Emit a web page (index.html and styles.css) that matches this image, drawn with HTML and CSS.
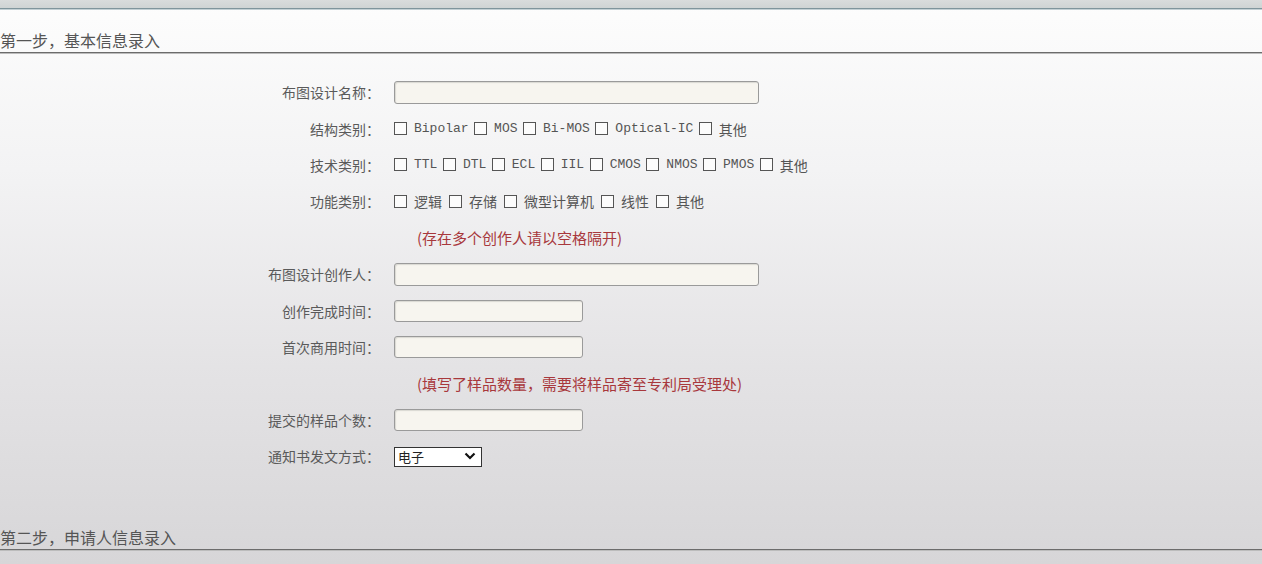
FILE: index.html
```html
<!DOCTYPE html>
<html lang="zh-CN">
<head>
  <meta charset="UTF-8">
  <title>集成电路布图设计登记申请</title>
  <link rel="stylesheet" href="styles.css">
</head>
<body>
  <div class="topbar"></div>

  <div class="step">
    <h3 class="step-title">第一步，基本信息录入</h3>
  </div>

  <div class="form">
    <div class="row">
      <label class="label">布图设计名称：</label>
      <div class="field"><input type="text" class="text long"></div>
    </div>
    <div class="row">
      <label class="label">结构类别：</label>
      <div class="field options latin">
        <label class="opt"><input type="checkbox">Bipolar</label>
        <label class="opt"><input type="checkbox">MOS</label>
        <label class="opt"><input type="checkbox">Bi-MOS</label>
        <label class="opt"><input type="checkbox">Optical-IC</label>
        <label class="opt"><input type="checkbox"><span class="cn">其他</span></label>
      </div>
    </div>
    <div class="row">
      <label class="label">技术类别：</label>
      <div class="field options latin">
        <label class="opt"><input type="checkbox">TTL</label>
        <label class="opt"><input type="checkbox">DTL</label>
        <label class="opt"><input type="checkbox">ECL</label>
        <label class="opt"><input type="checkbox">IIL</label>
        <label class="opt"><input type="checkbox">CMOS</label>
        <label class="opt"><input type="checkbox">NMOS</label>
        <label class="opt"><input type="checkbox">PMOS</label>
        <label class="opt"><input type="checkbox"><span class="cn">其他</span></label>
      </div>
    </div>
    <div class="row">
      <label class="label">功能类别：</label>
      <div class="field options cn-opts">
        <label class="opt"><input type="checkbox">逻辑</label>
        <label class="opt"><input type="checkbox">存储</label>
        <label class="opt"><input type="checkbox">微型计算机</label>
        <label class="opt"><input type="checkbox">线性</label>
        <label class="opt"><input type="checkbox">其他</label>
      </div>
    </div>
    <div class="row">
      <span class="label"></span>
      <div class="field note">(存在多个创作人请以空格隔开)</div>
    </div>
    <div class="row">
      <label class="label">布图设计创作人：</label>
      <div class="field"><input type="text" class="text long"></div>
    </div>
    <div class="row">
      <label class="label">创作完成时间：</label>
      <div class="field"><input type="text" class="text short"></div>
    </div>
    <div class="row">
      <label class="label">首次商用时间：</label>
      <div class="field"><input type="text" class="text short"></div>
    </div>
    <div class="row">
      <span class="label"></span>
      <div class="field note">(填写了样品数量，需要将样品寄至专利局受理处)</div>
    </div>
    <div class="row">
      <label class="label">提交的样品个数：</label>
      <div class="field"><input type="text" class="text short"></div>
    </div>
    <div class="row">
      <label class="label">通知书发文方式：</label>
      <div class="field">
        <span class="select-wrap">
          <select class="select">
            <option>电子</option>
            <option>纸件</option>
          </select>
          <svg class="chevron" width="12" height="8" viewBox="0 0 12 8"><path d="M1.5 1.5 L6 6 L10.5 1.5" fill="none" stroke="#111" stroke-width="2.2"/></svg>
        </span>
      </div>
    </div>
  </div>

  <div class="step step-two">
    <h3 class="step-title">第二步，申请人信息录入</h3>
  </div>
</body>
</html>
```

FILE: styles.css
```css
html {
  height: 100%;
  background: linear-gradient(to bottom, #fdfdfd 0%, #f3f3f4 30%, #e4e3e5 65%, #d7d6d8 100%);
}
body {
  margin: 0;
  min-height: 100%;
  font-family: "Noto Sans CJK SC", "DejaVu Sans", sans-serif;
  font-size: 14px;
  color: #555;
  overflow: hidden;
}
.topbar {
  height: 8px;
  background: linear-gradient(to bottom, #d9dcdc, #cfd4d4);
  border-bottom: 1px solid #7f959c;
  box-shadow: 0 1px 0 #c3d0d4;
}
.step {
  padding: 21px 0 2px;
  border-bottom: 1px solid #6c6c6c;
  box-shadow: 0 1px 0 #bcbcbc;
}
.step-title {
  margin: 0;
  font-size: 16px;
  font-weight: normal;
  line-height: 20px;
  color: #555;
}
.step-two {
  margin-top: 32px;
}
.form {
  margin-top: 21px;
}
.row {
  display: grid;
  grid-template-columns: 380px 1fr;
  column-gap: 14px;
  align-items: center;
  height: 36.4px;
}
.label {
  text-align: right;
  color: #5a5a5a;
  white-space: nowrap;
}
.field {
  display: flex;
  align-items: center;
}
.text {
  box-sizing: border-box;
  height: 23px;
  margin: 0;
  padding: 2px 4px;
  background: #f7f5ef;
  border: 1px solid #9a9a9a;
  border-radius: 3px;
  box-shadow: inset 1px 1px 1px rgba(0,0,0,0.12);
  font: inherit;
}
.long {
  width: 365px;
}
.short {
  width: 189px;
  height: 22px;
}
.options {
  gap: 5.5px;
}
.latin {
  font-family: "Liberation Mono", "Noto Sans CJK SC", monospace;
  font-size: 13px;
}
.latin .cn {
  font-family: "Noto Sans CJK SC", sans-serif;
  font-size: 14px;
}
.cn-opts {
  gap: 7px;
}
.opt {
  display: flex;
  align-items: center;
  white-space: nowrap;
  color: #555;
}
.opt input {
  appearance: none;
  box-sizing: border-box;
  width: 13px;
  height: 13px;
  margin: 0 7px 0 0;
  background: #fcfcfc;
  border: 1px solid #555;
}
.note {
  padding-left: 23px;
  font-size: 15px;
  color: #a8383c;
  white-space: nowrap;
}
.select-wrap {
  position: relative;
  display: inline-block;
}
.select {
  appearance: none;
  box-sizing: border-box;
  width: 88px;
  height: 20px;
  margin: 0;
  padding: 0 0 0 3px;
  background: #fff;
  border: 1px solid #333;
  border-radius: 0;
  font-family: "Noto Sans CJK SC", sans-serif;
  font-size: 13px;
  line-height: 18px;
  color: #222;
}
.chevron {
  position: absolute;
  right: 6px;
  top: 6px;
  pointer-events: none;
}
```
